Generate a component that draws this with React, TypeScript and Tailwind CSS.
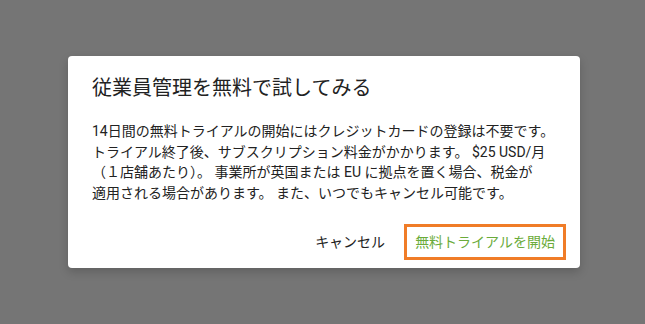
import React from "react";

const FONT = 'font-["Roboto","Noto_Sans_CJK_JP",sans-serif]';

export default function App() {
  return (
    <div className={`flex h-[324px] w-[645px] items-start bg-[#757575] pt-[56px] pl-[68px] ${FONT}`}>
      <div className="flex w-[512px] flex-col rounded-[4px] bg-white shadow-[0_4px_10px_rgba(0,0,0,0.18)]">
        <h2 className="px-6 pt-4 pb-4 text-[20px] leading-[32px] font-normal text-[#222]">
          従業員管理を無料で試してみる
        </h2>
        <div className="px-6 pb-[21px] text-[14px] leading-[20.5px] text-[#222]">
          <p className="mt-[1px]">
            14日間の無料トライアルの開始にはクレジットカードの登録は不要です。
            <br />
            トライアル終了後、サブスクリプション料金がかかります。 $25 USD/月
            <br />
            （１店舗あたり）。 事業所が英国または EU に拠点を置く場合、税金が
            <br />
            適用される場合があります。 また、いつでもキャンセル可能です。
          </p>
        </div>
        <div className="flex items-center justify-end gap-[11px] pr-[14px] pb-2">
          <button className="h-9 px-2 text-[14px] text-[#222]">キャンセル</button>
          <button className="h-9 border-[3px] border-[#f07c28] px-2 text-[14px] text-[#6aab3a]">
            無料トライアルを開始
          </button>
        </div>
      </div>
    </div>
  );
}
